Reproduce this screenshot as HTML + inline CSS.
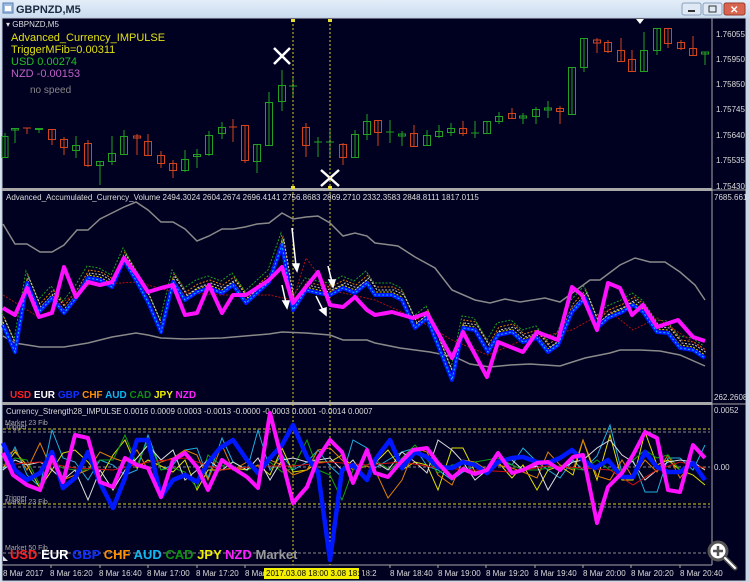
<!DOCTYPE html>
<html><head><meta charset="utf-8"><style>
html,body{margin:0;padding:0;width:750px;height:582px;overflow:hidden;background:#d6e3f1}
svg{display:block}
text{font-family:"Liberation Sans",sans-serif}
</style></head><body>
<svg width="750" height="582" viewBox="0 0 750 582" xmlns="http://www.w3.org/2000/svg">
<defs><linearGradient id="tb" x1="0" y1="0" x2="0" y2="1"><stop offset="0" stop-color="#e4eef9"/><stop offset="1" stop-color="#c9dbef"/></linearGradient></defs>
<rect x="0" y="0" width="750" height="18" fill="url(#tb)"/>
<rect x="3" y="3" width="10" height="10" fill="#9fbde0" stroke="#5a7fb0"/>
<rect x="5" y="6" width="6" height="5" fill="#fff"/>
<text x="16" y="13" font-size="11" font-weight="bold" fill="#1a2a40">GBPNZD,M5</text>
<rect x="682" y="3" width="19" height="12" rx="2" fill="#dfe9f5" stroke="#8aa0bb"/>
<rect x="688" y="10" width="7" height="2" fill="#333"/>
<rect x="703" y="3" width="19" height="12" rx="2" fill="#dfe9f5" stroke="#8aa0bb"/>
<rect x="709" y="6" width="7" height="6" fill="none" stroke="#333"/>
<rect x="724" y="3" width="21" height="12" rx="2" fill="#d9644f" stroke="#9a3a2a"/>
<text x="730" y="13" font-size="10" font-weight="bold" fill="#fff">✕</text>
<rect x="2" y="18" width="744" height="563" fill="#000020"/>
<rect x="2" y="18" width="744" height="563" fill="none" stroke="#c0c8d4" stroke-width="1"/>
<line x1="712" y1="18" x2="712" y2="565" stroke="#a8a8a8"/>
<rect x="2" y="188" width="710" height="3" fill="#a8a8a8"/>
<rect x="2" y="402" width="710" height="3" fill="#a8a8a8"/>
<line x1="2" y1="565" x2="712" y2="565" stroke="#a8a8a8"/>
<line x1="712" y1="190" x2="746" y2="190" stroke="#a8a8a8"/>
<line x1="712" y1="404" x2="746" y2="404" stroke="#a8a8a8"/>

<!-- price axis -->
<g font-size="8" fill="#ddd">
<text x="716" y="37">1.76055</text><text x="716" y="62">1.75950</text><text x="716" y="87">1.75850</text><text x="716" y="112">1.75745</text><text x="716" y="138">1.75640</text><text x="716" y="163">1.75535</text><text x="716" y="189">1.75430</text>
<text x="714" y="200">7685.6615</text><text x="714" y="400">262.2608</text>
<text x="714" y="413">0.0052</text><text x="714" y="470">0.00</text>
</g>
<polygon points="636,19 644,19 640,24" fill="#fff"/>

<!-- candles -->
<g stroke-width="1" fill="none">
<g stroke="#22a022">
<path d="M5 133V157M15 128V143M39 128V133M76 136V158M100 161V185M112 136V165M124 130V155M185 150V172M197 149V168M209 131V156M222 122V139M257 144V173M269 92V145M282 70V111M293 76V96M318 137V157M330 130V157M355 130V158M367 114V140M390 120V143M402 131V146M427 130V146M439 125V138M451 123V136M475 121V138M487 121V133M499 112V124M523 113V124M536 107V124M548 101V118M572 67V114M584 38V72M644 32V72M657 28V55M705 52V65"/>
<rect x="2" y="136.5" width="6" height="21"/><rect x="11.5" y="128.5" width="7" height="1.5"/><rect x="35.5" y="128.5" width="7" height="1"/><rect x="72.5" y="145.5" width="7" height="5"/><rect x="96.5" y="161.5" width="7" height="4"/><rect x="108.5" y="153.5" width="7" height="8"/><rect x="120.5" y="136.5" width="7" height="18"/><rect x="181.5" y="159.5" width="7" height="11"/><rect x="193.5" y="154.5" width="7" height="2"/><rect x="205.5" y="135.5" width="7" height="19"/><rect x="218.5" y="127.5" width="7" height="6"/><rect x="253.5" y="144.5" width="7" height="17"/><rect x="265.5" y="102.5" width="7" height="43"/><rect x="278.5" y="85.5" width="7" height="16"/>
<path d="M289 86H297M314 142H322M326 142H334M386 132H394M471 133H479"/>
<rect x="351.5" y="134.5" width="7" height="23"/><rect x="363.5" y="121.5" width="7" height="13"/><rect x="398.5" y="134" width="7" height="2"/><rect x="423.5" y="135.5" width="7" height="10"/><rect x="435.5" y="131.5" width="7" height="5"/><rect x="447.5" y="128.5" width="7" height="4"/><rect x="483.5" y="121.5" width="7" height="12"/><rect x="495.5" y="116.5" width="7" height="5"/><rect x="519.5" y="116" width="7" height="2"/><rect x="532.5" y="109.5" width="7" height="7"/><rect x="544.5" y="108" width="7" height="2"/><rect x="568.5" y="67.5" width="7" height="47"/><rect x="580.5" y="38.5" width="7" height="29"/><rect x="640.5" y="50.5" width="7" height="21"/><rect x="653.5" y="28.5" width="7" height="22"/><rect x="701.5" y="52" width="7" height="2"/>
</g>
<g stroke="#d4441c">
<path d="M27 128V134M52 129V145M64 137V155M88 140V167M137 134V155M148 134V156M161 151V168M173 160V178M233 119V142M245 125V163M306 123V157M343 143V165M378 120V146M414 125V146M463 121V136M512 108V118M560 106V124M597 38V53M608 40V53M621 38V62M632 50V72M668 28V48M681 40V50M693 36V55"/>
<path d="M23 128H31M229 127H237"/>
<rect x="48.5" y="129.5" width="7" height="10"/><rect x="60.5" y="139.5" width="7" height="8"/><rect x="84.5" y="143.5" width="7" height="22"/><rect x="133.5" y="136" width="7" height="2"/><rect x="144.5" y="141.5" width="7" height="14"/><rect x="157.5" y="155.5" width="7" height="8"/><rect x="169.5" y="163.5" width="7" height="7"/><rect x="241.5" y="125.5" width="7" height="35"/><rect x="302.5" y="127.5" width="7" height="18"/><rect x="339.5" y="144.5" width="7" height="13"/><rect x="374.5" y="120.5" width="7" height="12"/><rect x="410.5" y="133.5" width="7" height="13"/><rect x="459.5" y="128.5" width="7" height="5"/><rect x="508.5" y="113.5" width="7" height="5"/><rect x="556.5" y="108.5" width="7" height="3"/><rect x="593.5" y="40" width="7" height="3"/><rect x="604.5" y="42.5" width="7" height="9"/><rect x="617.5" y="50.5" width="7" height="11"/><rect x="628.5" y="59.5" width="7" height="12"/><rect x="664.5" y="28.5" width="7" height="15"/><rect x="677.5" y="42.5" width="7" height="6"/><rect x="689.5" y="48.5" width="7" height="7"/>
</g>
</g>
<!-- X marks -->
<path d="M274 48L290 64M290 48L274 64M321 170L339 186M339 170L321 186" stroke="#fff" stroke-width="2.5"/>
<!-- vertical lines -->
<g stroke="#d8d020" stroke-dasharray="2,2" stroke-width="1"><line x1="293" y1="20" x2="293" y2="565"/><line x1="330" y1="20" x2="330" y2="565"/></g>
<g fill="#e8e030"><rect x="291" y="19" width="4" height="3"/><rect x="328" y="19" width="4" height="3"/><rect x="291" y="186" width="4" height="3"/><rect x="328" y="186" width="4" height="3"/></g>

<g font-size="8" fill="#ddd"><text x="6" y="27">▾ GBPNZD,M5</text></g>
<g font-size="11">
<text x="11" y="41" fill="#e0e010">Advanced_Currency_IMPULSE</text>
<text x="11" y="53" fill="#e0e010">TriggerMFib=0.00311</text>
<text x="11" y="65" fill="#22c022">USD 0.00274</text>
<text x="11" y="77" fill="#c060c8">NZD -0.00153</text>
<text x="30" y="93" fill="#888" font-size="10">no speed</text>
</g>

<!-- panel 2 -->
<text x="6" y="200" font-size="8" fill="#ddd">Advanced_Accumulated_Currency_Volume  2494.3024 2604.2674 2696.4141 2756.8683 2869.2710 2332.3583 2848.8111 1817.0115</text>
<g fill="none" stroke="#8a8a8a" stroke-width="1.5">
<polyline points="3,224 15,244 27,244 40,252 52,252 64,245 77,230 88,230 100,219 112,213 124,207 136,202 148,210 161,222 173,222 185,229 197,241 209,236 222,229 233,229 245,227 257,224 269,223 282,213 293,219 306,217 318,216 330,223 343,236 355,233 367,236 375,243 398,246 415,257 435,268 452,290 475,300 490,303 505,299 520,302 545,298 560,302 575,291 590,280 600,280 620,265 635,258 650,262 665,262 680,272 695,285 705,300"/>
<polyline points="3,336 15,343 40,347 64,347 88,343 112,337 136,333 148,335 161,338 185,339 222,338 245,336 269,334 282,332 306,333 330,335 343,340 367,340 375,343 400,348 430,352 455,357 470,364 490,367 510,365 530,364 560,366 585,358 610,353 620,350 640,350 660,351 680,355 705,366"/>
</g>
<g id="bl2" fill="none" stroke-width="1" stroke-dasharray="2,1.5">
<polyline stroke="#e08000" transform="translate(1,-8)" points="3,325 15,352 27,283 39,312 52,298 64,313 76,298 88,278 100,280 112,287 124,260 137,282 148,302 161,332 173,282 185,300 197,292 209,288 222,293 233,285 246,303 257,293 269,282 282,245 293,310 306,290 318,293 330,295 343,288 355,293 367,283 375,295 392,295 402,300 415,328 427,318 452,380 463,328 475,330 488,352 498,335 512,332 523,342 537,338 548,352 558,345 572,312 585,298 597,328 608,318 622,312 633,305 643,312 657,332 668,333 680,348 693,350 705,358"/>
<polyline stroke="#20a020" transform="translate(-1,-12)" points="3,325 15,352 27,283 39,312 52,298 64,313 76,298 88,278 100,280 112,287 124,260 137,282 148,302 161,332 173,282 185,300 197,292 209,288 222,293 233,285 246,303 257,293 269,282 282,245 293,310 306,290 318,293 330,295 343,288 355,293 367,283 375,295 392,295 402,300 415,328 427,318 452,380 463,328 475,330 488,352 498,335 512,332 523,342 537,338 548,352 558,345 572,312 585,298 597,328 608,318 622,312 633,305 643,312 657,332 668,333 680,348 693,350 705,358"/>
<polyline stroke="#e0e000" transform="translate(0,-3)" points="3,325 15,352 27,283 39,312 52,298 64,313 76,298 88,278 100,280 112,287 124,260 137,282 148,302 161,332 173,282 185,300 197,292 209,288 222,293 233,285 246,303 257,293 269,282 282,245 293,310 306,290 318,293 330,295 343,288 355,293 367,283 375,295 392,295 402,300 415,328 427,318 452,380 463,328 475,330 488,352 498,335 512,332 523,342 537,338 548,352 558,345 572,312 585,298 597,328 608,318 622,312 633,305 643,312 657,332 668,333 680,348 693,350 705,358"/>
<polyline stroke="#ccc" transform="translate(2,-5)" points="3,325 15,352 27,283 39,312 52,298 64,313 76,298 88,278 100,280 112,287 124,260 137,282 148,302 161,332 173,282 185,300 197,292 209,288 222,293 233,285 246,303 257,293 269,282 282,245 293,310 306,290 318,293 330,295 343,288 355,293 367,283 375,295 392,295 402,300 415,328 427,318 452,380 463,328 475,330 488,352 498,335 512,332 523,342 537,338 548,352 558,345 572,312 585,298 597,328 608,318 622,312 633,305 643,312 657,332 668,333 680,348 693,350 705,358"/>
<polyline stroke="#b01010" points="3,295 40,318 88,285 137,282 173,292 222,295 269,295 293,300 306,258 330,290 375,300 415,318 452,340 488,355 523,340 572,330 608,310 633,330 657,318 705,350"/>
</g>
<polyline fill="none" stroke="#0018ff" stroke-width="4" stroke-linejoin="round" points="3,325 15,352 27,283 39,312 52,298 64,313 76,298 88,278 100,280 112,287 124,260 137,282 148,302 161,332 173,282 185,300 197,292 209,288 222,293 233,285 246,303 257,293 269,282 282,245 293,310 306,290 318,293 330,295 343,288 355,293 367,283 375,295 392,295 402,300 415,328 427,318 452,380 463,328 475,330 488,352 498,335 512,332 523,342 537,338 548,352 558,345 572,312 585,298 597,328 608,318 622,312 633,305 643,312 657,332 668,333 680,348 693,350 705,358"/>
<polyline fill="none" stroke="#00c8ff" stroke-width="1" stroke-dasharray="2,2" points="3,325 15,352 27,283 39,312 52,298 64,313 76,298 88,278 100,280 112,287 124,260 137,282 148,302 161,332 173,282 185,300 197,292 209,288 222,293 233,285 246,303 257,293 269,282 282,245 293,310 306,290 318,293 330,295 343,288 355,293 367,283 375,295 392,295 402,300 415,328 427,318 452,380 463,328 475,330 488,352 498,335 512,332 523,342 537,338 548,352 558,345 572,312 585,298 597,328 608,318 622,312 633,305 643,312 657,332 668,333 680,348 693,350 705,358"/>
<polyline fill="none" stroke="#ff10ff" stroke-width="4" stroke-linejoin="round" points="3,308 15,315 27,288 39,317 52,313 64,267 76,297 88,282 100,285 112,282 124,258 137,275 148,292 161,288 173,285 185,315 197,313 209,285 222,313 233,295 246,295 257,288 269,280 282,267 293,303 306,287 318,272 330,305 343,307 355,297 367,310 375,315 392,312 413,318 427,313 452,358 463,332 487,377 498,342 523,352 537,332 558,340 572,287 582,295 597,330 608,283 620,288 632,315 643,305 657,327 678,320 693,337 705,341"/>
<g stroke="#fff" stroke-width="1.5" fill="#fff">
<path d="M292 228L296 266M282 285L286 303M328 266L332 282M316 296L324 312"/>
<polygon points="293,264 299,264 297,271"/><polygon points="283,301 289,301 287,308"/><polygon points="329,280 335,280 333,287"/><polygon points="320,310 326,308 326,315"/>
</g>
<g font-size="10" font-weight="bold">
<text x="10" y="398"><tspan fill="#ff2020">USD</tspan> <tspan fill="#fff">EUR</tspan> <tspan fill="#1030ff">GBP</tspan> <tspan fill="#ff9000">CHF</tspan> <tspan fill="#10b8f0">AUD</tspan> <tspan fill="#109010">CAD</tspan> <tspan fill="#f0f000">JPY</tspan> <tspan fill="#ff20ff">NZD</tspan></text>
</g>

<!-- panel 3 -->
<text x="6" y="414" font-size="8" fill="#ddd">Currency_Strength28_IMPULSE  0.0016 0.0009 0.0003 -0.0013 -0.0000 -0.0003 0.0001 -0.0014 0.0007</text>
<g stroke-width="1" fill="none" stroke-dasharray="3,2">
<line x1="3" y1="429" x2="710" y2="429" stroke="#d8d020"/>
<line x1="3" y1="432" x2="710" y2="432" stroke="#888"/>
<line x1="3" y1="504" x2="710" y2="504" stroke="#d8d020"/>
<line x1="3" y1="507" x2="710" y2="507" stroke="#888"/>
<line x1="3" y1="467" x2="710" y2="467" stroke="#888"/>
<line x1="3" y1="553" x2="710" y2="553" stroke="#888"/>
</g>
<g font-size="7" fill="#aaa"><text x="5" y="425">Market 23 Fib</text><text x="5" y="429">Trigger</text><text x="5" y="500">Trigger</text><text x="5" y="504">Market 23 Fib</text><text x="5" y="550">Market 50 Fib</text></g>
<g fill="none" stroke-width="1">
<polyline stroke="#20b0e0" points="3,470 15,447 27,475 40,487 52,430 63,458 75,462 88,480 100,460 113,465 125,475 137,470 148,435 161,470 173,465 185,450 197,448 208,478 222,438 233,462 247,470 258,430 270,470 282,455 293,470 307,462 318,450 330,466 342,477 353,440 367,448 375,468 388,460 402,452 415,448 427,466 438,470 452,480 463,472 475,466 487,470 498,460 512,465 523,448 537,462 548,470 560,478 573,460 583,470 597,456 610,425 622,473 633,460 645,492 657,492 668,458 680,458 693,470 705,445"/>
<polyline stroke="#e0e000" points="3,468 15,452 27,465 40,488 52,470 63,453 75,450 88,462 100,478 113,455 125,440 137,468 148,460 161,466 173,472 185,460 197,490 208,470 222,470 233,468 247,470 258,465 270,475 282,448 293,472 307,470 318,462 330,462 342,455 353,468 367,478 375,463 388,450 402,470 415,462 427,465 438,490 452,448 463,448 475,472 487,470 498,462 512,478 523,465 537,490 548,470 560,466 573,475 583,440 597,480 610,435 622,480 633,480 645,432 657,465 668,460 680,470 693,475 705,485"/>
<polyline stroke="#e08000" points="3,458 15,450 27,470 40,443 52,470 63,480 75,475 88,470 100,452 113,458 125,462 137,450 148,470 161,462 173,458 185,450 197,455 208,480 222,445 233,470 247,462 258,475 270,460 282,465 293,475 307,470 318,450 330,448 342,460 353,470 367,466 375,470 388,498 402,480 415,448 427,452 438,475 452,485 463,460 475,462 487,470 498,465 512,468 523,472 537,478 548,452 560,465 573,470 583,440 597,476 610,480 622,460 633,478 645,460 657,472 668,455 680,478 693,462 705,470"/>
<polyline stroke="#10a010" points="3,465 15,458 27,460 40,485 52,462 63,468 75,470 88,470 100,460 113,460 125,435 137,465 148,440 161,470 173,468 185,472 197,488 208,455 222,466 233,462 247,470 258,466 270,462 282,472 293,468 307,440 318,470 330,475 342,500 353,470 367,465 375,460 390,470 415,445 438,473 452,465 475,462 498,458 523,470 537,470 560,466 583,470 597,460 610,470 622,470 645,450 657,458 668,455 680,470 693,465 705,468"/>
<polyline stroke="#ddd" points="3,470 15,460 27,465 40,462 52,470 63,480 75,470 88,500 100,470 113,490 125,470 137,458 148,445 161,460 173,450 185,480 197,470 208,460 222,470 233,462 247,470 258,458 270,480 282,460 293,458 307,462 318,460 330,458 342,470 353,460 367,480 375,462 388,470 402,452 415,462 427,473 438,440 452,450 463,462 475,480 487,470 498,462 512,460 523,470 537,466 548,490 560,470 573,462 583,460 597,448 610,440 622,455 633,462 645,480 657,470 668,462 680,460 693,462 705,470"/>
<polyline stroke="#d01010" points="3,465 40,462 75,468 113,470 148,462 185,458 222,470 258,466 293,466 330,462 367,465 402,462 438,468 475,470 512,472 548,466 583,468 610,470 633,485 657,470 680,462 705,468"/>
</g>
<polyline fill="none" stroke="#0018ff" stroke-width="4.5" stroke-linejoin="round" points="3,443 15,470 27,480 40,473 52,452 63,488 75,478 88,452 100,483 113,508 125,478 137,440 148,440 161,497 173,480 185,475 197,482 208,463 220,448 233,440 247,460 258,473 270,458 282,445 293,425 307,457 318,472 330,560 342,470 353,465 367,480 375,460 390,440 402,468 415,452 427,457 438,467 452,468 463,462 475,465 487,473 498,462 512,458 523,457 537,462 548,463 560,458 572,450 583,460 595,468 608,460 622,477 633,477 645,452 657,467 668,472 680,472 693,463 705,480"/>
<polyline fill="none" stroke="#ff10ff" stroke-width="4" stroke-linejoin="round" points="3,453 13,475 27,485 40,490 52,457 63,482 75,435 88,438 100,482 113,487 125,458 137,465 148,468 161,497 173,460 185,453 197,467 208,490 222,460 233,468 247,477 258,488 270,413 282,460 293,503 307,487 318,458 330,440 342,452 353,483 367,450 375,473 388,477 400,463 413,450 427,448 438,463 452,478 463,469 475,474 487,470 498,453 512,473 523,470 537,463 548,462 560,470 573,457 583,455 597,523 608,487 622,473 633,455 645,432 657,438 668,490 680,492 693,445 705,458"/>
<g font-size="13" font-weight="bold">
<text x="10" y="559"><tspan fill="#ff2020">USD</tspan> <tspan fill="#fff">EUR</tspan> <tspan fill="#1030ff">GBP</tspan> <tspan fill="#ff9000">CHF</tspan> <tspan fill="#10b8f0">AUD</tspan> <tspan fill="#109010">CAD</tspan> <tspan fill="#f0f000">JPY</tspan> <tspan fill="#ff20ff">NZD</tspan> <tspan fill="#999">Market</tspan></text>
</g>
<polygon points="3,561 3,556 8,561" fill="#ddd"/>

<!-- time axis -->
<g stroke="#aaa"><path d="M51 565v3M100 565v3M148 565v3M197 565v3M245 565v3M390 565v3M438 565v3M486 565v3M535 565v3M583 565v3M631 565v3M680 565v3"/></g>
<g font-size="8" fill="#ddd">
<text x="3" y="576">8 Mar 2017</text><text x="50" y="576">8 Mar 16:20</text><text x="99" y="576">8 Mar 16:40</text><text x="147" y="576">8 Mar 17:00</text><text x="196" y="576">8 Mar 17:20</text><text x="245" y="576">8 Mar</text><text x="361" y="576">18:2</text>
<text x="390" y="576">8 Mar 18:40</text><text x="438" y="576">8 Mar 19:00</text><text x="486" y="576">8 Mar 19:20</text><text x="534" y="576">8 Mar 19:40</text><text x="583" y="576">8 Mar 20:00</text><text x="631" y="576">8 Mar 20:20</text><text x="680" y="576">8 Mar 20:40</text>
</g>
<rect x="264" y="568" width="95" height="11" fill="#f4f000"/>
<text x="266" y="576" font-size="8" fill="#000">2017.03.08 18:00  3.08 18:15</text>

<!-- zoom icon -->
<g><circle cx="718" cy="551" r="9" fill="#fff" stroke="#555" stroke-width="3"/><path d="M713 551h10M718 546v10" stroke="#555" stroke-width="2.5"/><path d="M725 558l10 10" stroke="#555" stroke-width="5" stroke-linecap="round"/><path d="M725 558l10 10" stroke="#fff" stroke-width="2" stroke-linecap="round"/></g>
<rect x="746" y="18" width="4" height="564" fill="#c8d6e6"/>
</svg>
</body></html>
